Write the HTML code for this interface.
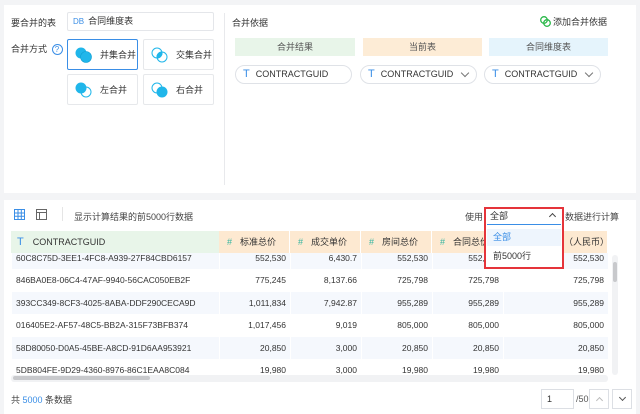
<!DOCTYPE html>
<html><head><meta charset="utf-8"><style>
*{box-sizing:border-box;margin:0;padding:0}
body{width:640px;height:414px;background:#f3f4f6;font-family:"Liberation Sans","Noto Sans CJK SC",sans-serif;font-size:9px;color:#333;position:relative;overflow:hidden}
.a{position:absolute}
.panel{background:#fff}
.box{border:1px solid #e4e6ea;border-radius:2px;background:#fff}
.btn{border:1px solid #e6e8eb;border-radius:2px;background:#fff;display:flex;align-items:center;padding-left:7px}
.btn span{margin-left:7px;font-size:9px;color:#333}
.hd{height:18px;line-height:18px;text-align:center;color:#555;font-size:9px}
.fld{height:19px;border:1px solid #dfe2e7;border-radius:10px;line-height:17px;padding-left:7px;font-size:9px;color:#333}
.fld b{color:#3a8ee6;font-weight:normal;margin-right:6px;font-size:11px}
.chev{position:absolute;right:8px;top:4px;width:6px;height:6px;border-right:1px solid #777;border-bottom:1px solid #777;transform:rotate(45deg)}
table{border-collapse:collapse;table-layout:fixed}
td{font-size:8.5px;color:#333;border:1px solid #fff;text-align:right;padding:0 4px;height:22.5px;white-space:nowrap;overflow:hidden}
td:first-child{text-align:left}
tr.l td{background:#f5f8fd}
.th{position:absolute;top:231px;height:22px;line-height:22px;font-size:9px;color:#333;background:#fde9d1;border-right:1px solid #fff;padding-left:8px;white-space:nowrap;overflow:hidden}
.th i{font-style:normal;color:#36b5a0;margin-right:8px}
</style></head><body>
<div class="a panel" style="left:4px;top:5px;width:632px;height:188px"></div>
<div class="a" style="left:11px;top:16px;font-size:9px">要合并的表</div>
<div class="a box" style="left:67px;top:12px;width:147px;height:19px;padding-left:5px;line-height:17px"><span style="color:#3a8ee6;font-size:8px;margin-right:4px">DB</span>合同维度表</div>
<div class="a" style="left:11px;top:42px">合并方式 <span style="display:inline-block;width:11px;height:11px;border:1px solid #3a8ee6;border-radius:50%;color:#3a8ee6;font-size:8px;text-align:center;line-height:9px;margin-left:2px">?</span></div>
<div class="a btn" style="left:67px;top:39px;width:71px;height:31px;border-color:#3a8ee6"><svg width="18" height="16"><circle cx="6" cy="6" r="5.5" fill="#20b6ea"/><circle cx="11" cy="10" r="5.5" fill="#20b6ea" stroke="#0f9fd4" stroke-width=".6"/></svg><span>并集合并</span></div>
<div class="a btn" style="left:143px;top:39px;width:71px;height:31px"><svg width="18" height="16"><defs><clipPath id="c1"><circle cx="6" cy="6" r="5.5"/></clipPath></defs><circle cx="11" cy="10" r="5.5" fill="#20b6ea" clip-path="url(#c1)"/><circle cx="6" cy="6" r="5" fill="none" stroke="#20b6ea"/><circle cx="11" cy="10" r="5" fill="none" stroke="#20b6ea"/></svg><span>交集合并</span></div>
<div class="a btn" style="left:67px;top:74px;width:71px;height:31px"><svg width="18" height="16"><circle cx="6" cy="6" r="5.5" fill="#20b6ea"/><circle cx="11" cy="10" r="5" fill="none" stroke="#20b6ea"/></svg><span>左合并</span></div>
<div class="a btn" style="left:143px;top:74px;width:71px;height:31px"><svg width="18" height="16"><circle cx="6" cy="6" r="5" fill="none" stroke="#20b6ea"/><circle cx="11" cy="10" r="5.5" fill="#20b6ea"/></svg><span>右合并</span></div>
<div class="a" style="left:224px;top:13px;width:1px;height:172px;background:#e8e9ec"></div>
<div class="a" style="left:232px;top:16px">合并依据</div>
<div class="a" style="left:540px;top:15px;color:#333"><svg width="11" height="11" style="vertical-align:-2px;margin-right:2px"><circle cx="4" cy="4" r="3.3" fill="none" stroke="#2bb84a" stroke-width="1.3"/><circle cx="7" cy="7" r="3.3" fill="none" stroke="#2bb84a" stroke-width="1.3"/></svg>添加合并依据</div>
<div class="a hd" style="left:235px;top:38px;width:120px;background:#e8f5e9">合并结果</div>
<div class="a hd" style="left:363px;top:38px;width:119px;background:#fdecd6">当前表</div>
<div class="a hd" style="left:489px;top:38px;width:119px;background:#e5f4fc">合同维度表</div>
<div class="a fld" style="left:235px;top:65px;width:117px"><b>T</b>CONTRACTGUID</div>
<div class="a fld" style="left:360px;top:65px;width:117px"><b>T</b>CONTRACTGUID<i class="chev"></i></div>
<div class="a fld" style="left:484px;top:65px;width:117px"><b>T</b>CONTRACTGUID<i class="chev"></i></div>

<div class="a panel" style="left:4px;top:200px;width:632px;height:214px"></div>
<svg class="a" style="left:14px;top:209px" width="11" height="11"><rect x=".5" y=".5" width="10" height="10" fill="none" stroke="#3a8ee6"/><path d="M4 0V11M7.3 0V11M0 4H11M0 7.3H11" stroke="#3a8ee6"/></svg>
<svg class="a" style="left:36px;top:209px" width="11" height="11"><rect x=".5" y=".5" width="10" height="10" fill="none" stroke="#666"/><path d="M0 3.5H11M3.5 3.5V11" stroke="#666"/></svg>
<div class="a" style="left:62px;top:207px;width:1px;height:14px;background:#e5e5e5"></div>
<div class="a" style="left:74px;top:210px;color:#444">显示计算结果的前5000行数据</div>
<div class="a" style="left:465px;top:210px;color:#444">使用</div>
<div class="a" style="left:565px;top:210px;color:#444">数据进行计算</div>

<div class="a" style="left:11px;top:231px;width:208px;height:22px;background:#e8f5e9;line-height:22px;padding-left:6px;font-size:9px"><span style="color:#3a8ee6;font-size:11px;margin-right:9px">T</span>CONTRACTGUID</div>
<div class="th" style="left:219px;width:71px"><i>#</i>标准总价</div>
<div class="th" style="left:290px;width:71px"><i>#</i>成交单价</div>
<div class="th" style="left:361px;width:71px"><i>#</i>房间总价</div>
<div class="th" style="left:432px;width:71px"><i>#</i>合同总价</div>
<div class="th" style="left:503px;width:105px;padding-left:52px">价（人民币）</div>
<div class="a" style="left:11px;top:253px;width:597px;height:122px;overflow:hidden">
<table style="width:597px;margin-top:-7px">
<colgroup><col style="width:208px"><col style="width:71px"><col style="width:71px"><col style="width:71px"><col style="width:71px"><col style="width:105px"></colgroup>
<tr class="l"><td>60C8C75D-3EE1-4FC8-A939-27F84CBD6157</td><td>552,530</td><td>6,430.7</td><td>552,530</td><td>552,530</td><td>552,530</td></tr>
<tr><td>846BA0E8-06C4-47AF-9940-56CAC050EB2F</td><td>775,245</td><td>8,137.66</td><td>725,798</td><td>725,798</td><td>725,798</td></tr>
<tr class="l"><td>393CC349-8CF3-4025-8ABA-DDF290CECA9D</td><td>1,011,834</td><td>7,942.87</td><td>955,289</td><td>955,289</td><td>955,289</td></tr>
<tr><td>016405E2-AF57-48C5-BB2A-315F73BFB374</td><td>1,017,456</td><td>9,019</td><td>805,000</td><td>805,000</td><td>805,000</td></tr>
<tr class="l"><td>58D80050-D0A5-45BE-A8CD-91D6AA953921</td><td>20,850</td><td>3,000</td><td>20,850</td><td>20,850</td><td>20,850</td></tr>
<tr><td>5DB804FE-9D29-4360-8976-86C1EAA8C084</td><td>19,980</td><td>3,000</td><td>19,980</td><td>19,980</td><td>19,980</td></tr>
</table></div>
<div class="a" style="left:11px;top:375px;width:597px;height:7px;background:#f1f2f4;border-radius:3px"></div>
<div class="a" style="left:13px;top:376px;width:137px;height:4px;background:#c8c9cc;border-radius:2px"></div>
<div class="a" style="left:612px;top:255px;width:6px;height:120px;background:#f1f2f4;border-radius:3px"></div>
<div class="a" style="left:613px;top:262px;width:4px;height:20px;background:#c8c9cc;border-radius:2px"></div>

<div class="a" style="left:484px;top:207px;width:80px;height:62px;border:2px solid #e5343a;background:#fff"></div>
<div class="a" style="left:487px;top:209px;width:74px;height:16px;border-bottom:1px solid #3a8ee6;line-height:14px;padding-left:3px;color:#333">全部<i style="position:absolute;right:6px;top:5px;width:5px;height:5px;border-left:1px solid #444;border-top:1px solid #444;transform:rotate(45deg)"></i></div>
<div class="a" style="left:487px;top:229px;width:74px;height:17px;background:#eef5fd;color:#3a8ee6;line-height:17px;padding-left:6px">全部</div>
<div class="a" style="left:487px;top:248px;width:74px;height:17px;line-height:17px;padding-left:6px;color:#333">前5000行</div>

<div class="a" style="left:11px;top:393px;color:#444">共 <span style="color:#3a8ee6">5000</span> 条数据</div>
<div class="a" style="left:541px;top:389px;width:33px;height:20px;border:1px solid #dcdfe4;line-height:18px;padding-left:5px">1</div>
<div class="a" style="left:576px;top:394px;color:#555">/50</div>
<div class="a" style="left:589px;top:389px;width:20px;height:20px;border:1px solid #dcdfe4"><i style="position:absolute;left:7px;top:8px;width:5px;height:5px;border-left:1px solid #bbb;border-top:1px solid #bbb;transform:rotate(45deg)"></i></div>
<div class="a" style="left:612px;top:389px;width:20px;height:20px;border:1px solid #dcdfe4"><i style="position:absolute;left:7px;top:5px;width:5px;height:5px;border-right:1px solid #555;border-bottom:1px solid #555;transform:rotate(45deg)"></i></div>
</body></html>
